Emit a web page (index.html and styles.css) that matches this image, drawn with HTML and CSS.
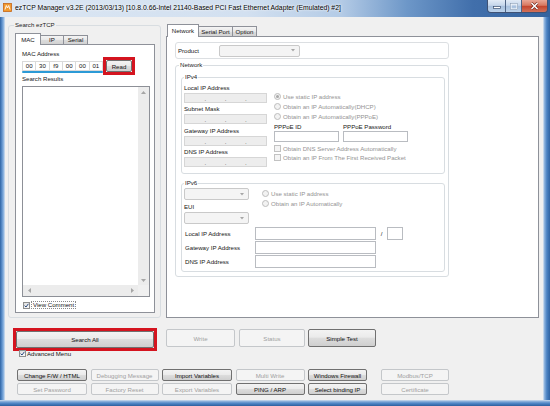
FILE: index.html
```html
<!DOCTYPE html>
<html>
<head>
<meta charset="utf-8">
<title>ezTCP Manager</title>
<link rel="stylesheet" href="styles.css">
</head>
<body>
<div class="window">
  <div class="titlebar">
    <svg class="appicon" viewBox="0 0 9 9"><rect x="0.5" y="0.5" width="8" height="8" fill="#f39a2e" stroke="#c4661a" stroke-width="0.8"/><path d="M2 6.5 L3.3 2.5 L4.5 5 L5.7 2.5 L7 6.5" fill="none" stroke="#fff" stroke-width="0.9"/></svg>
    <span class="title">ezTCP Manager v3.2E (2013/03/13) [10.8.0.66-Intel 21140-Based PCI Fast Ethernet Adapter (Emulated) #2]</span>
    <div class="winbtns">
      <span class="wb min"><svg width="8" height="3" viewBox="0 0 8 3"><rect x="0.5" y="0.5" width="7" height="2" fill="#fff" stroke="#3a4f70" stroke-width="0.7"/></svg></span>
      <span class="wb max"><svg width="8" height="7" viewBox="0 0 8 7"><rect x="1" y="1" width="6" height="5" fill="none" stroke="#f4f7fb" stroke-width="1.2"/><rect x="0.4" y="0.4" width="7.2" height="6.2" fill="none" stroke="#7d8fa8" stroke-width="0.5"/></svg></span>
      <span class="wb close"><svg width="9" height="8" viewBox="0 0 9 8"><path d="M1.5 1 L7.5 7 M7.5 1 L1.5 7" stroke="#6b2418" stroke-width="2.6"/><path d="M1.5 1 L7.5 7 M7.5 1 L1.5 7" stroke="#fff" stroke-width="1.5"/></svg></span>
    </div>
  </div>
  <div class="main">
    <div class="fl"></div>
    <div class="client">
      <div class="top">
        <fieldset class="grp search">
          <legend>Search ezTCP</legend>
          <div class="ltabs">
            <div class="tabrow lrow">
              <span class="tab sel lt1">MAC</span><span class="tab lt2">IP</span><span class="tab lt3">Serial</span>
            </div>
            <div class="panel lpanel">
              <div class="lbl">MAC Address</div>
              <div class="macrow">
                <div class="macfields">
                  <div class="macboxes"><span>00</span><span>30</span><span>f9</span><span>00</span><span>00</span><span>01</span></div>
                  <div class="progress"></div>
                </div>
                <div class="redbox"><span class="btn readbtn">Read</span></div>
              </div>
              <div class="lbl2">Search Results</div>
              <div class="list">
                <div class="listarea"></div>
                <div class="vs">
                  <svg width="5" height="3" viewBox="0 0 5 3"><polygon points="0,3 2.5,0 5,3" fill="#a6a6a6"/></svg>
                  <svg width="5" height="3" viewBox="0 0 5 3"><polygon points="0,0 2.5,3 5,0" fill="#a6a6a6"/></svg>
                </div>
                <div class="hs">
                  <svg width="3" height="5" viewBox="0 0 3 5"><polygon points="3,0 0,2.5 3,5" fill="#a6a6a6"/></svg>
                  <svg width="3" height="5" viewBox="0 0 3 5"><polygon points="0,0 3,2.5 0,5" fill="#a6a6a6"/></svg>
                </div>
                <div class="corner"></div>
              </div>
              <div class="vc">
                <span class="cb on"><svg width="5" height="5" viewBox="0 0 5 5"><path d="M0.6 2.6 L2 4 L4.4 0.8" fill="none" stroke="#2b4a7e" stroke-width="1"/></svg></span>
                <span class="focus">View Comment</span>
              </div>
            </div>
          </div>
        </fieldset>

        <div class="rtabs">
          <div class="tabrow rrow">
            <span class="tab sel rt1">Network</span><span class="tab rt2">Serial Port</span><span class="tab rt3">Option</span>
          </div>
          <div class="panel rpanel">
            <div class="prod">
              <span class="plbl">Product</span>
              <span class="combo pcombo"><svg width="4" height="3" viewBox="0 0 4 3"><polygon points="0,0 2,2.5 4,0" fill="#a6a6a6"/></svg></span>
            </div>
            <fieldset class="grp net">
              <legend>Network</legend>
              <fieldset class="grp v4">
                <legend>IPv4</legend>
                <div class="v4body">
                  <div class="v4left">
                    <div class="ilbl">Local IP Address</div>
                    <div class="ipbox"><i>.</i><i>.</i><i>.</i></div>
                    <div class="ilbl">Subnet Mask</div>
                    <div class="ipbox"><i>.</i><i>.</i><i>.</i></div>
                    <div class="ilbl">Gateway IP Address</div>
                    <div class="ipbox"><i>.</i><i>.</i><i>.</i></div>
                    <div class="ilbl">DNS IP Address</div>
                    <div class="ipbox"><i>.</i><i>.</i><i>.</i></div>
                  </div>
                  <div class="v4right">
                    <div class="opt"><span class="rad on"></span>Use static IP address</div>
                    <div class="opt"><span class="rad"></span>Obtain an IP Automatically(DHCP)</div>
                    <div class="opt"><span class="rad"></span>Obtain an IP Automatically(PPPoE)</div>
                    <div class="pppoe">
                      <div class="pcol"><div class="plabel">PPPoE ID</div><div class="tbox pbox"></div></div>
                      <div class="pcol"><div class="plabel">PPPoE Password</div><div class="tbox pbox"></div></div>
                    </div>
                    <div class="chk first"><span class="cb dis"></span>Obtain DNS Server Address Automatically</div>
                    <div class="chk"><span class="cb dis"></span>Obtain an IP From The First Received Packet</div>
                  </div>
                </div>
              </fieldset>
              <fieldset class="grp v6">
                <legend>IPv6</legend>
                <div class="v6top">
                  <div class="v6left">
                    <span class="combo c6"><svg width="4" height="3" viewBox="0 0 4 3"><polygon points="0,0 2,2.5 4,0" fill="#a6a6a6"/></svg></span>
                    <div class="ilbl eui">EUI</div>
                    <span class="combo c6 c6b"><svg width="4" height="3" viewBox="0 0 4 3"><polygon points="0,0 2,2.5 4,0" fill="#a6a6a6"/></svg></span>
                  </div>
                  <div class="v6right">
                    <div class="opt"><span class="rad"></span>Use static IP address</div>
                    <div class="opt"><span class="rad"></span>Obtain an IP Automatically</div>
                  </div>
                </div>
                <div class="addr">
                  <div class="arow"><span class="alabel">Local IP Address</span><span class="tbox abox"></span><span class="slash">/</span><span class="tbox sbox"></span></div>
                  <div class="arow"><span class="alabel">Gateway IP Address</span><span class="tbox abox"></span></div>
                  <div class="arow"><span class="alabel">DNS IP Address</span><span class="tbox abox"></span></div>
                </div>
              </fieldset>
            </fieldset>
          </div>
        </div>
      </div>

      <div class="actions">
        <div class="redbig"><span class="btn">Search All</span></div>
        <span class="btn dis bwrite">Write</span>
        <span class="btn dis bstatus">Status</span>
        <span class="btn bsimple">Simple Test</span>
      </div>
      <div class="adv">
        <span class="cb on"><svg width="5" height="5" viewBox="0 0 5 5"><path d="M0.6 2.6 L2 4 L4.4 0.8" fill="none" stroke="#2b4a7e" stroke-width="1"/></svg></span>
        <span>Advanced Menu</span>
      </div>
      <div class="grid">
        <span class="btn">Change F/W / HTML</span>
        <span class="btn dis">Debugging Message</span>
        <span class="btn">Import Variables</span>
        <span class="btn dis">Multi Write</span>
        <span class="btn">Windows Firewall</span>
        <span class="btn dis c6col">Modbus/TCP</span>
        <span class="btn dis">Set Password</span>
        <span class="btn dis">Factory Reset</span>
        <span class="btn dis">Export Variables</span>
        <span class="btn">PING / ARP</span>
        <span class="btn">Select binding IP</span>
        <span class="btn dis c6col">Certificate</span>
      </div>
    </div>
    <div class="fr"></div>
  </div>
  <div class="fb"></div>
</div>
</body>
</html>
```

FILE: styles.css
```css
* { box-sizing: border-box; }
html, body { margin: 0; padding: 0; }
body {
  width: 550px; height: 406px; overflow: hidden;
  font-family: "Liberation Sans", Arial, sans-serif;
  font-size: 6.1px; color: #161616; background: #fff;
}
.window { width: 550px; height: 406px; display: flex; flex-direction: column; }

/* title bar */
.titlebar {
  height: 17px; flex: none; display: flex; align-items: flex-start;
  background: linear-gradient(90deg, #dbe6f3 0%, #d2e0f0 45%, #b4cbe6 62%, #6d97c8 74%, #416fab 86%, #35649f 100%);
}
.appicon { width: 9px; height: 9px; margin: 3px 0 0 3px; flex: none; }
.title {
  margin-left: 3px; line-height: 16px; font-size: 6.8px; white-space: nowrap; color: #000;
  text-shadow: 0 0 2px #fff, 0 0 3px #fff;
}
.winbtns {
  margin: 0 2px 0 auto; display: flex; height: 13px; flex: none;
  border: 1px solid #3f5274; border-top: 0; border-radius: 0 0 4px 4px; overflow: hidden;
}
.wb { display: flex; align-items: center; justify-content: center; height: 100%; }
.min {
  width: 18px; align-items: flex-end; padding-bottom: 3px;
  background: linear-gradient(#e2ebf6, #c5d6eb 45%, #a7bfdc 50%, #bcd3ec);
  border-right: 1px solid #4e6384;
}
.max {
  width: 16px;
  background: linear-gradient(#e2ebf6, #c5d6eb 45%, #a7bfdc 50%, #bcd3ec);
  border-right: 1px solid #4e6384;
}
.close { width: 25px; background: linear-gradient(#e9a796, #d87860 45%, #c4432b 50%, #d2725a); }

/* frame */
.main { display: flex; height: 383px; flex: none; }
.fl { width: 5px; background: linear-gradient(90deg, #2f64a4, #5d90cb 40%, #93b9e2 75%, #d9e4f1); }
.fr { width: 7px; background: linear-gradient(90deg, #dfe8f2, #8fb4de 20%, #4a82c3 55%, #2f63a3); }
.fb { height: 6px; flex: none; background: linear-gradient(#d0deee, #7aa4d6 30%, #4b82c3 60%, #2c5f9e); }

.client {
  width: 538px; background: #f0f0f0;
  display: flex; flex-direction: column;
  padding: 4px 4px 0 3px;
}
.top { display: flex; align-items: flex-start; }

/* group boxes */
.grp {
  margin: 0; min-width: 0;
  border: 1px solid #d8dde1; border-radius: 3px;
}
.grp > legend { padding: 0 1px; line-height: 8px; font-size: 6.1px; color: #1c1c1c; }

.search { width: 153px; padding: 4px 5px 4px 6px; }
.search > legend { margin-left: -1px; }

/* tabs */
.tabrow { display: flex; align-items: flex-end; }
.tab {
  height: 9px; border: 1px solid #8e9199; border-bottom: 0;
  background: linear-gradient(#f4f4f4, #e8e8e8 50%, #dcdcdc 51%, #d2d2d2);
  line-height: 8px; text-align: center; margin-right: -1px; white-space: nowrap;
}
.tab.sel { background: #fff; position: relative; z-index: 1; margin-bottom: -1px; }
.panel { border: 1px solid #8e9199; background: #fff; }

.ltabs { width: 140px; }
.lrow { height: 11px; }
.lrow .tab.sel { height: 12px; line-height: 11px; }
.lt1 { width: 26px; }
.lt2 { width: 24px; }
.lt3 { width: 25px; }
.lpanel { height: 269px; padding: 5px 0 0 6px; }

.lbl { line-height: 7px; }
.macrow { display: flex; height: 18px; }
.macfields { width: 80px; margin-top: 4px; }
.macboxes { display: flex; height: 10px; }
.macboxes span {
  flex: 1; border: 1px solid #dadada; margin-right: -1px;
  text-align: center; line-height: 8px; background: #fff;
}
.progress { width: 81px; height: 2px; background: #2c9ad6; border-radius: 1px; }
.redbox { margin-left: 1px; width: 32px; height: 18px; border: 3px solid #d4141f; }
.readbtn { width: 100%; height: 100%; }
.lbl2 { line-height: 8px; }
.list {
  margin-top: 3px; width: 128px; height: 211px;
  border: 1px solid #8d9097; background: #fff;
  display: grid; grid-template-columns: 1fr 11px; grid-template-rows: 1fr 11px;
}
.vs {
  background: #ececec; display: flex; flex-direction: column; align-items: center;
  justify-content: space-between; padding: 4px 0 3px;
}
.hs {
  background: #ececec; display: flex; align-items: center;
  justify-content: space-between; padding: 0 4px 0 5px;
}
.corner { background: #f0f0f0; }
.vc { margin-top: 4px; margin-left: 1px; height: 8px; display: flex; align-items: center; }
.focus { border: 1px dotted #8a8a8a; line-height: 6px; padding: 0 1px; margin-left: 1px; }

/* checkboxes & radios */
.cb {
  width: 7px; height: 7px; flex: none; border: 1px solid #8f8f8f;
  background: linear-gradient(135deg, #dedede, #fbfbfb);
  display: inline-flex; align-items: center; justify-content: center;
}
.cb.dis { border-color: #c2c2c2; background: #f4f4f4; }
.rad {
  width: 7px; height: 7px; flex: none; border-radius: 50%;
  border: 1px solid #bdbdbd; background: #f2f2f2; margin-right: 2px;
  display: inline-flex; align-items: center; justify-content: center;
}
.rad.on::after { content: ""; width: 3px; height: 3px; border-radius: 50%; background: #a8a8a8; }

/* right tabs */
.rtabs { margin-left: 5px; margin-top: 3px; width: 373px; }
.rrow { height: 12px; padding-left: 1px; }
.rrow .tab { height: 10px; line-height: 9px; }
.rrow .tab.sel { height: 13px; line-height: 12px; }
.rt1 { width: 32px; }
.rt2 { width: 35px; }
.rt3 { width: 25px; }
.rpanel { height: 282px; padding: 5px 0 0 8px; }

.prod {
  width: 274px; height: 17px; border: 1px solid #dcdfe2; border-radius: 3px;
  display: flex; align-items: center; padding-left: 2px;
}
.plbl { width: 41px; }
.combo {
  display: flex; align-items: center; justify-content: flex-end;
  height: 12px; border: 1px solid #c9c9c9; border-radius: 2px; background: #f4f4f4;
  padding-right: 4px;
}
.pcombo { width: 81px; }

.net { width: 274px; margin-top: 2px; padding: 4px 4px 4px 5px; }
.net > legend { margin-left: -2px; }
.v4 { width: 264px; height: 101px; padding: 3px 2px 0 2px; }
.v4body { display: flex; }
.v4left { width: 84px; }
.ilbl { line-height: 8px; }
.ipbox {
  height: 10px; margin: 1px 0 2.3px; border: 1px solid #d6d6d6; background: #ededed;
  display: flex; justify-content: space-evenly; align-items: flex-end; line-height: 7px;
}
.ipbox i { font-style: normal; width: 0; display: flex; justify-content: center; color: #444; }
.v4right { margin-left: 7px; margin-top: 7.5px; width: 170px; }
.opt { height: 10px; display: flex; align-items: center; color: #939393; white-space: nowrap; }
.pppoe { display: flex; margin-top: 1px; }
.pcol { width: 65px; margin-right: 4px; }
.plabel { line-height: 8px; }
.tbox { border: 1px solid #b9bcc1; background: #fff; display: block; }
.pbox { height: 11.5px; }
.chk { height: 9px; display: flex; align-items: center; color: #939393; white-space: nowrap; }
.chk .cb { margin-right: 2px; }
.chk.first { margin-top: 2px; }

.v6 { width: 264px; height: 93px; margin-top: 5px; padding: 1px 2px 0 2px; }
.v6top { display: flex; }
.v6left { width: 65px; }
.c6 { width: 65px; }
.eui { margin-top: 3px; }
.c6b { margin-top: 1px; }
.v6right { margin-left: 13px; }
.addr { margin-top: 3px; }
.arow { display: flex; height: 13px; margin-bottom: 1px; align-items: stretch; }
.alabel { width: 71px; padding-left: 1px; display: flex; align-items: center; }
.abox { width: 121px; }
.slash { width: 11px; display: flex; align-items: center; justify-content: center; }
.sbox { width: 16px; }

/* buttons */
.btn {
  display: flex; align-items: center; justify-content: center;
  border: 1px solid #707070; border-radius: 2px; white-space: nowrap;
  background: linear-gradient(#f3f3f3, #ebebeb 45%, #dddddd 50%, #cfcfcf);
  color: #111;
}
.btn.dis { border-color: #c4c7ca; background: #f4f4f4; color: #a0a0a0; }

.actions { display: flex; align-items: flex-start; margin-top: 10px; margin-left: 5px; }
.redbig { width: 144px; height: 23px; border: 3px solid #d4141f; }
.redbig .btn { width: 100%; height: 100%; }
.bwrite { margin-left: 9px; margin-top: 1px; width: 69px; height: 18px; }
.bstatus { margin-left: 4px; margin-top: 1px; width: 66px; height: 18px; }
.bsimple { margin-left: 3px; margin-top: 1px; width: 68px; height: 18px; }

.adv { margin-top: -2px; margin-left: 11px; height: 9px; display: flex; align-items: center; position: relative; }
.adv .cb { margin-right: 1px; }

.grid {
  margin-top: 11px; margin-left: 9px;
  display: grid; grid-template-columns: 70px 68px 70px 69px 59px 78.5px;
  column-gap: 3.5px; row-gap: 2px; grid-auto-rows: 12px;
}
.c6col { margin-left: 10.5px; }
```
